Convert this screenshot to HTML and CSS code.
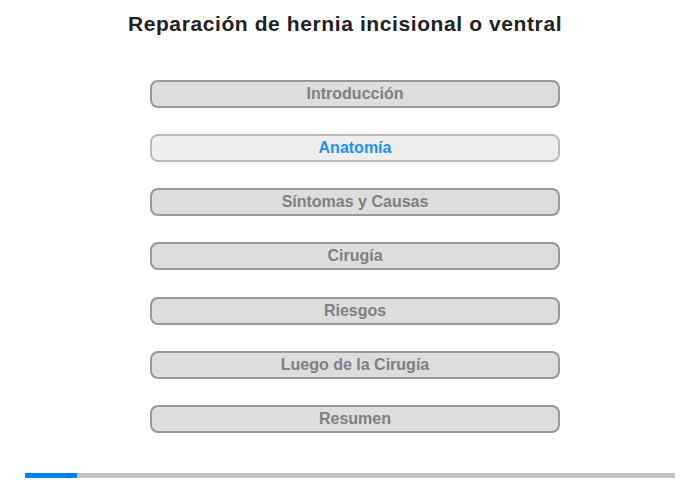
FILE: index.html
```html
<!DOCTYPE html>
<html lang="es">
<head>
<meta charset="utf-8">
<title>Reparación de hernia incisional o ventral</title>
<link rel="stylesheet" href="styles.css">
</head>
<body>
<div class="page">
  <h1 class="title">Reparación de hernia incisional o ventral</h1>
  <nav class="menu">
    <div class="item">Introducción</div>
    <div class="item active">Anatomía</div>
    <div class="item">Síntomas y Causas</div>
    <div class="item">Cirugía</div>
    <div class="item">Riesgos</div>
    <div class="item">Luego de la Cirugía</div>
    <div class="item">Resumen</div>
  </nav>
  <div class="progress"><div class="progress-fill" style="width: 52px"></div></div>
</div>
</body>
</html>
```
FILE: styles.css
```css
html, body {
  margin: 0;
  padding: 0;
  background: #fff;
}
.page {
  width: 700px;
  height: 480px;
  display: flex;
  flex-direction: column;
  font-family: "Liberation Sans", Arial, sans-serif;
}
.title {
  margin: 11px 0 0 0;
  padding-right: 10px;
  font-size: 21px;
  line-height: 26px;
  letter-spacing: 0.6px;
  font-weight: bold;
  color: #222;
  text-align: center;
}
.menu {
  margin-top: 43px;
  padding-left: 150px;
  display: flex;
  flex-direction: column;
  gap: 26.17px;
}
.item {
  box-sizing: border-box;
  width: 410px;
  height: 28px;
  border: 2px solid #999;
  border-radius: 8px;
  background: #ddd;
  color: #808080;
  font-size: 16px;
  font-weight: bold;
  line-height: 24px;
  text-align: center;
}
.item.active {
  border-color: #bbb;
  background: #eee;
  color: #1e90ff;
}
.progress {
  margin: auto 25px 2px 25px;
  height: 5px;
  background: #c4c4c4;
}
.progress-fill {
  height: 100%;
  background: #0080ff;
}
```
